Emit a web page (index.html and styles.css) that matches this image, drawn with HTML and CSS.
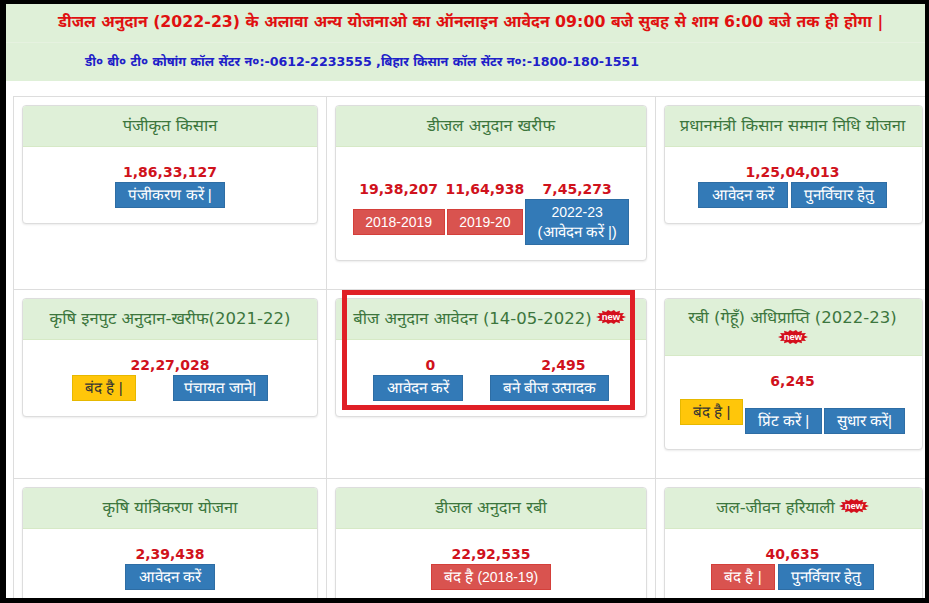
FILE: index.html
```html
<!DOCTYPE html>
<html lang="hi">
<head>
<meta charset="utf-8">
<title>योजनाएँ</title>
<link rel="stylesheet" href="styles.css">
</head>
<body>
<div class="frame">
  <div class="alert alert-red">डीजल अनुदान (2022-23) के अलावा अन्य योजनाओ का ऑनलाइन आवेदन 09:00 बजे सुबह से शाम 6:00 बजे तक ही होगा |</div>
  <div class="alert alert-blue">डी० बी० टी० कोषांग कॉल सेंटर न०:-0612-2233555 ,बिहार किसान कॉल सेंटर न०:-1800-180-1551</div>
  <div class="grid-wrap">
    <div class="grid">
      <section class="cell">
        <div class="card">
          <h3 class="card-head">पंजीकृत किसान</h3>
          <div class="card-body">
            <div class="num">1,86,33,127</div>
            <div class="btns"><a class="btn blue">पंजीकरण करें |</a></div>
          </div>
        </div>
      </section>
      <section class="cell">
        <div class="card">
          <h3 class="card-head">डीजल अनुदान खरीफ</h3>
          <div class="card-body multi">
            <div class="col"><div class="num">19,38,207</div><a class="btn red drop latin">2018-2019</a></div>
            <div class="col"><div class="num">11,64,938</div><a class="btn red drop latin">2019-20</a></div>
            <div class="col"><div class="num">7,45,273</div><a class="btn blue tall"><span class="latin">2022-23</span><br>(आवेदन करें |)</a></div>
          </div>
        </div>
      </section>
      <section class="cell">
        <div class="card">
          <h3 class="card-head">प्रधानमंत्री किसान सम्मान निधि योजना</h3>
          <div class="card-body">
            <div class="num">1,25,04,013</div>
            <div class="btns gap3"><a class="btn blue apply">आवेदन करें</a><a class="btn blue">पुनर्विचार हेतु</a></div>
          </div>
        </div>
      </section>

      <section class="cell">
        <div class="card">
          <h3 class="card-head">कृषि इनपुट अनुदान-खरीफ(2021-22)</h3>
          <div class="card-body">
            <div class="num">22,27,028</div>
            <div class="btns gap37"><a class="btn yellow">बंद है |</a><a class="btn blue snug">पंचायत जाने|</a></div>
          </div>
        </div>
      </section>
      <section class="cell highlighted">
        <div class="card">
          <h3 class="card-head">बीज अनुदान आवेदन (14-05-2022)
            <svg class="new" viewBox="0 0 30 14"><polygon class="burst" points="0,7 4,5.5 2,3 6.5,3.2 6,0.8 10,2 12,0 15,1.6 18,0 20,2 24,0.8 23.5,3.2 28,3 26,5.5 30,7 26,8.5 28,11 23.5,10.8 24,13.2 20,12 18,14 15,12.4 12,14 10,12 6,13.2 6.5,10.8 2,11 4,8.5"/><text class="burst-text" x="15" y="10.2">new</text></svg>
          </h3>
          <div class="card-body">
            <div class="num num-pair"><span>0</span><span>2,495</span></div>
            <div class="btns gap27"><a class="btn blue apply">आवेदन करें</a><a class="btn blue">बने बीज उत्पादक</a></div>
          </div>
        </div>
        <div class="red-box"></div>
      </section>
      <section class="cell">
        <div class="card">
          <h3 class="card-head stacked">रबी (गेहूँ) अधिप्राप्ति (2022-23)<br>
            <svg class="new" viewBox="0 0 30 14"><polygon class="burst" points="0,7 4,5.5 2,3 6.5,3.2 6,0.8 10,2 12,0 15,1.6 18,0 20,2 24,0.8 23.5,3.2 28,3 26,5.5 30,7 26,8.5 28,11 23.5,10.8 24,13.2 20,12 18,14 15,12.4 12,14 10,12 6,13.2 6.5,10.8 2,11 4,8.5"/><text class="burst-text" x="15" y="10.2">new</text></svg>
          </h3>
          <div class="card-body">
            <div class="num">6,245</div>
            <div class="btns staggered"><a class="btn yellow">बंद है |</a><a class="btn blue lower">प्रिंट करें |</a><a class="btn blue lower">सुधार करें|</a></div>
          </div>
        </div>
      </section>

      <section class="cell">
        <div class="card">
          <h3 class="card-head">कृषि यांत्रिकरण योजना</h3>
          <div class="card-body">
            <div class="num">2,39,438</div>
            <div class="btns"><a class="btn blue apply">आवेदन करें</a></div>
          </div>
        </div>
      </section>
      <section class="cell">
        <div class="card">
          <h3 class="card-head">डीजल अनुदान रबी</h3>
          <div class="card-body">
            <div class="num">22,92,535</div>
            <div class="btns"><a class="btn red">बंद है <span class="latin">(2018-19)</span></a></div>
          </div>
        </div>
      </section>
      <section class="cell">
        <div class="card">
          <h3 class="card-head">जल-जीवन हरियाली
            <svg class="new" viewBox="0 0 30 14"><polygon class="burst" points="0,7 4,5.5 2,3 6.5,3.2 6,0.8 10,2 12,0 15,1.6 18,0 20,2 24,0.8 23.5,3.2 28,3 26,5.5 30,7 26,8.5 28,11 23.5,10.8 24,13.2 20,12 18,14 15,12.4 12,14 10,12 6,13.2 6.5,10.8 2,11 4,8.5"/><text class="burst-text" x="15" y="10.2">new</text></svg>
          </h3>
          <div class="card-body">
            <div class="num">40,635</div>
            <div class="btns gap3"><a class="btn red">बंद है |</a><a class="btn blue">पुनर्विचार हेतु</a></div>
          </div>
        </div>
      </section>
    </div>
  </div>
</div>
</body>
</html>
```

FILE: styles.css
```css
* { box-sizing: border-box; }
html, body { margin: 0; padding: 0; height: 603px; overflow: hidden; background: #000; }
.frame {
  margin: 4px 4px 5px 6px;
  height: 594px;
  background: #fff;
  overflow: hidden;
  font-family: "DejaVu Sans", Verdana, "Noto Sans", sans-serif;
}
.alert {
  background: #dff0d8;
  font-weight: 700;
  display: flex;
  align-items: center;
}
.alert-red { height: 39px; padding: 0 0 4px 52px; color: #e01010; font-size: 15.8px; border-bottom: 1px solid #e6f2e0; }
.alert-blue { height: 38px; padding: 0 0 2px 79px; color: #2020c8; font-size: 12.65px; }
.grid-wrap { padding: 15px 0 0 7px; }
.grid {
  display: grid;
  grid-template-columns: 313px 329px 270px;
  grid-template-rows: 193px 189px 200px;
  border-top: 1px solid #ddd;
  border-left: 1px solid #ddd;
}
.cell {
  position: relative;
  padding: 8px 8px 0;
  border-right: 1px solid #ddd;
  border-bottom: 1px solid #ddd;
}
.cell:nth-child(3n) { border-right: 0; padding-right: 3px; }
.card {
  border: 1px solid #ddd;
  border-radius: 4px;
  box-shadow: 0 1px 2px rgba(0,0,0,.08);
  background: #fff;
  overflow: hidden;
}
.card-head {
  margin: 0;
  height: 41px;
  padding-bottom: 4px;
  display: flex;
  align-items: center;
  justify-content: center;
  gap: 4px;
  background: #dff0d8;
  border-bottom: 1px solid #d6e9c6;
  color: #3c763d;
  font-size: 16.5px;
  font-weight: 400;
  white-space: nowrap;
}
.card-head.stacked { height: 57px; display: block; text-align: center; line-height: 18px; padding: 10px 0 0; }
.cell:nth-child(3n) .card-head { padding-right: 2px; }
.cell:nth-child(3n) .card-body { padding-right: 17px; }
.highlighted .card-head { padding-right: 3px; }
.card-body { padding: 15px; text-align: center; }
.num { color: #d0121c; font-weight: 700; font-size: 14px; line-height: 20px; white-space: nowrap; }
.btns { display: flex; justify-content: center; }
.btn {
  display: inline-block;
  padding: 2px 12px;
  font-family: "Liberation Sans", Arial, sans-serif;
  font-size: 15.2px;
  line-height: 20px;
  height: 26px;
  color: #fff;
  border: 1px solid transparent;
  white-space: nowrap;
}
.latin { font-size: 14px; }
.blue { background: #337ab7; border-color: #2e6da4; }
.red { background: #d9534f; border-color: #d43f3a; }
.yellow { background: #ffc60a; border-color: #e6b800; color: #333; }
.apply { padding: 2px 12.75px; }
.snug { padding: 2px 10.5px; }
.multi { display: flex; justify-content: center; gap: 2px; padding: 32px 15px 15px; }
.col { display: flex; flex-direction: column; align-items: center; }
.col .num { margin: 0 -6px; }
.drop { margin-top: 10px; padding: 2px 11.5px; }
.tall { height: 46px; text-align: center; font-size: 15px; padding: 2px 11.5px; }
.gap3 { gap: 3px; }
.gap37 { gap: 37px; }
.gap27 { gap: 27px; }
.num-pair { display: flex; justify-content: center; gap: 106px; padding-left: 29px; }
.staggered { gap: 1.5px; margin-top: 8px; }
.lower { margin-top: 9px; }
.new { width: 30px; height: 14px; vertical-align: middle; }
.burst { fill: #d40f1c; }
.burst-text { font-family: "Liberation Sans", Arial, sans-serif; font-weight: 700; font-size: 9.5px; fill: #fff; text-anchor: middle; }
.red-box {
  position: absolute;
  left: 15px;
  top: 0;
  width: 293px;
  height: 120px;
  border: 5px solid #e01f26;
}
```
